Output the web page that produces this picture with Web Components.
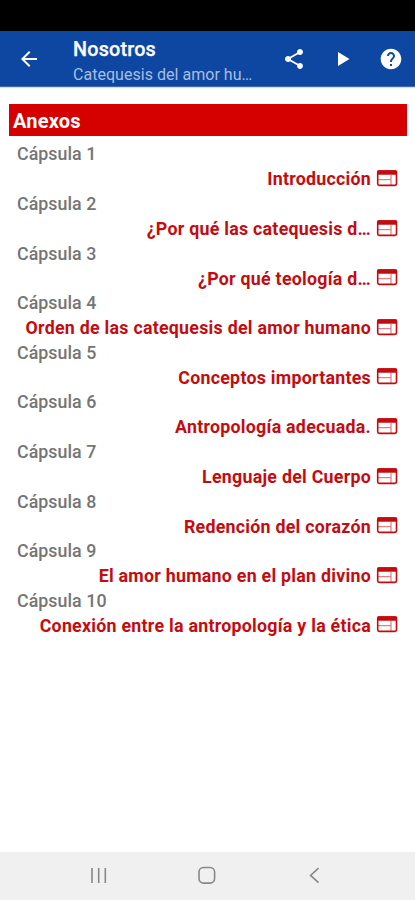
<!DOCTYPE html>
<html lang="es">
<head>
<meta charset="utf-8">
<title>Nosotros</title>
<style>
body{margin:0;background:#fff;font-family:Roboto,"Noto Sans",sans-serif}
</style>
</head>
<body>
<phone-screen>
  <app-bar slot="bar"><span slot="title">Nosotros</span><span slot="subtitle">Catequesis del amor hu…</span></app-bar>
  <section-title>Anexos</section-title>
  <capsule-item label="Cápsula 1">Introducción</capsule-item>
  <capsule-item label="Cápsula 2">¿Por qué las catequesis d…</capsule-item>
  <capsule-item label="Cápsula 3">¿Por qué teología d…</capsule-item>
  <capsule-item label="Cápsula 4">Orden de las catequesis del amor humano</capsule-item>
  <capsule-item label="Cápsula 5">Conceptos importantes</capsule-item>
  <capsule-item label="Cápsula 6">Antropología adecuada.</capsule-item>
  <capsule-item label="Cápsula 7">Lenguaje del Cuerpo</capsule-item>
  <capsule-item label="Cápsula 8">Redención del corazón</capsule-item>
  <capsule-item label="Cápsula 9">El amor humano en el plan divino</capsule-item>
  <capsule-item label="Cápsula 10">Conexión entre la antropología y la ética</capsule-item>
  <nav-bar slot="nav"></nav-bar>
</phone-screen>
<script>
class Base extends HTMLElement{
  constructor(){super();this.attachShadow({mode:'open'}).innerHTML=this.constructor.markup}
}
customElements.define('phone-screen',class extends Base{
  static markup=`<style>
  :host{display:flex;flex-direction:column;height:900px;width:415px;overflow:hidden;background:#fff}
  .status{height:31px;background:#000;flex:none}
  main{flex:1;min-height:0;padding:17px 8px 0 9px}
  </style><div class="status"></div><slot name="bar"></slot><main><slot></slot></main><slot name="nav"></slot>`;
});
customElements.define('app-bar',class extends Base{
  static markup=`<style>
  :host{display:flex;align-items:center;height:56px;flex:none;box-sizing:border-box;background:#0d47a1;color:#fff;padding:1px 12px 0 17px;border-bottom:1px solid #3d68b0;box-shadow:0 1px 1px #0002}
  svg{display:block;width:24px;height:24px;fill:#fff;flex:none}
  .text{margin-left:32px;width:190px;flex:none;padding-top:6px;white-space:nowrap}
  .t{font-size:19.8px;font-weight:500;line-height:24px;letter-spacing:.2px;-webkit-text-stroke:.25px}
  .s{font-size:16px;line-height:25px;color:#a9bde0;letter-spacing:.03px}
  .icons{display:flex;gap:25px;margin-left:19px}
  .icons svg:last-child{margin-left:-1px}
  </style>
  <svg viewBox="0 0 24 24"><path d="M20 11H7.83l5.59-5.59L12 4l-8 8 8 8 1.41-1.41L7.83 13H20z"/></svg>
  <div class="text"><div class="t"><slot name="title"></slot></div><div class="s"><slot name="subtitle"></slot></div></div>
  <div class="icons">
  <svg viewBox="0 0 24 24"><path d="M18 16.08c-.76 0-1.44.3-1.96.77L8.91 12.7c.05-.23.09-.46.09-.7s-.04-.47-.09-.7l7.05-4.11c.54.5 1.25.81 2.04.81 1.66 0 3-1.34 3-3s-1.34-3-3-3-3 1.34-3 3c0 .24.04.47.09.7L8.04 9.81C7.5 9.31 6.79 9 6 9c-1.66 0-3 1.34-3 3s1.34 3 3 3c.79 0 1.5-.31 2.04-.81l7.12 4.16c-.05.21-.08.43-.08.65 0 1.61 1.31 2.92 2.92 2.92s2.92-1.31 2.92-2.92-1.31-2.92-2.92-2.92z"/></svg>
  <svg viewBox="0 0 24 24"><path d="M7 5v14l11.5-7z"/></svg>
  <svg viewBox="0 0 24 24"><path d="M12 1.7C6.3 1.7 1.7 6.3 1.7 12S6.3 22.3 12 22.3 22.3 17.7 22.3 12 17.7 1.7 12 1.7zm1 17.3h-2v-2h2v2zm2.07-7.75l-.9.92C13.45 12.9 13 13.5 13 15h-2v-.5c0-1.1.45-2.1 1.17-2.83l1.24-1.26c.37-.36.59-.86.59-1.41 0-1.1-.9-2-2-2s-2 .9-2 2H8c0-2.21 1.79-4 4-4s4 1.79 4 4c0 .88-.36 1.68-.93 2.25z"/></svg>
  </div>`;
});
customElements.define('section-title',class extends Base{
  static markup=`<style>
  :host{display:block;height:32px;margin-bottom:6.4px;padding-left:4px;box-sizing:border-box;background:#d50000;color:#fff;font-size:20px;font-weight:700;line-height:34px;letter-spacing:.2px}
  </style><slot></slot>`;
});
customElements.define('capsule-item',class extends Base{
  static markup=`<style>
  :host{display:block;height:49.6px;white-space:nowrap}
  .label{height:24px;line-height:24px;padding-left:8px;font-size:17.8px;font-weight:500;color:#757575;letter-spacing:.06px}
  .row{display:flex;justify-content:flex-end;gap:5px;height:25px;padding-right:9px;color:#c40c10;font-size:17.8px;font-weight:700;line-height:25px;letter-spacing:.26px}
  svg{display:block;width:22px;height:18px;margin-top:2.7px}
  </style>
  <div class="label"></div>
  <div class="row"><span><slot></slot></span><svg viewBox="0 0 22 18"><rect x="1.7" y="2" width="18.8" height="14.4" rx="1.6" fill="#fff" stroke="currentColor" stroke-width="1.6"/><path d="M1.2 2.6Q1.2 1.2 2.6 1.2H19.5Q21 1.2 21 2.6V5.8H1.2z" fill="currentColor"/><path d="M2 10.7H14.6M15 6V16" fill="none" stroke="currentColor" stroke-width="1" opacity=".65"/></svg></div>`;
  connectedCallback(){this.shadowRoot.querySelector('.label').textContent=this.getAttribute('label')}
});
customElements.define('nav-bar',class extends Base{
  static markup=`<style>
  :host{display:flex;height:48px;flex:none;align-items:center;justify-content:space-between;padding:0 88px 2px 87px;box-sizing:border-box;background:#f0f0f0}
  svg{display:block;width:24px;height:24px;fill:none;stroke:#888;stroke-width:1.6}
  </style>
  <svg viewBox="0 0 24 24"><path d="M5 5V20M11.7 5V20M18.3 5V20"/></svg>
  <svg viewBox="0 0 24 24"><rect x="4" y="4.5" width="15.6" height="15.6" rx="4.5"/></svg>
  <svg viewBox="0 0 24 24"><path d="M15.5 5.2L7.6 12.4L15.5 19.6"/></svg>`;
});
</script>
</body>
</html>
